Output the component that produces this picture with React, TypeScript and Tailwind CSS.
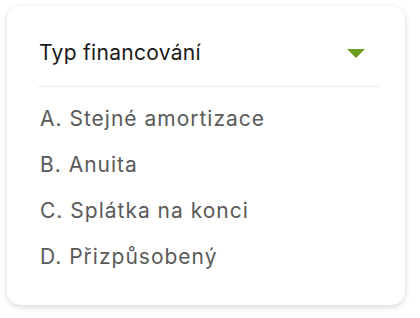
export default function App() {
  const options = ["A. Stejné amortizace", "B. Anuita", "C. Splátka na konci", "D. Přizpůsobený"];
  return (
    <div className="h-[318px] w-[420px] bg-white pl-[7px] pt-[6px]" style={{ fontFamily: "Inter, 'Noto Sans', sans-serif" }}>
      <div className="h-[299px] w-[398px] rounded-[14px] bg-white shadow-[0_2px_6px_rgba(0,0,0,0.16)]">
        <div className="flex items-center justify-between pl-[32px] pr-[40px] pt-[36px] pb-[22px]">
          <span className="text-[21px] leading-[22px] tracking-[0.3px] text-[#1a1a1a]">Typ financování</span>
          <svg width="18" height="9" viewBox="0 0 18 9">
            <path d="M0 0 H18 L9 9 Z" fill="#6c9d1f" />
          </svg>
        </div>
        <div className="ml-[31px] mr-[25px] h-px bg-[#ececec]" />
        <ul className="pl-[33px] pt-[19px]">
          {options.map((o) => (
            <li key={o} className="h-[46px] text-[21px] leading-[26px] tracking-[1px] text-[#5a5a5a]">
              {o}
            </li>
          ))}
        </ul>
      </div>
    </div>
  );
}
